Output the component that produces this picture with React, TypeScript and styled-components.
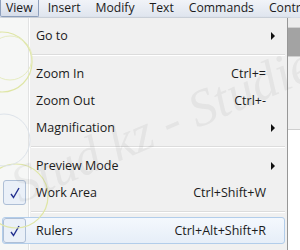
import styled, { createGlobalStyle } from 'styled-components';

const Global = createGlobalStyle`
  html, body { margin: 0; padding: 0; }
  body { width: 300px; height: 250px; overflow: hidden; background: #fff; }
`;

const Screen = styled.div`
  position: relative;
  width: 300px;
  height: 250px;
  overflow: hidden;
  font-family: "Open Sans", "Noto Sans", sans-serif;
  font-size: 12px;
  color: #1b1b1b;
  display: flex;
  flex-direction: column;
`;

const MenuBar = styled.div`
  height: 17px;
  display: flex;
  align-items: flex-start;
  gap: 3px;
  background: linear-gradient(#f1f3f8, #dfe5ee);
  border-bottom: 1px solid #d5dbe4;
  white-space: nowrap;
  flex: none;
  overflow: hidden;
`;

const BarItem = styled.div<{ $open?: boolean }>`
  height: 17px;
  box-sizing: border-box;
  line-height: 16px;
  padding: 0 5px;
  font-size: 12.2px;
  color: #1b1b1b;
  border: 1px solid ${p => (p.$open ? '#8ea0bd' : 'transparent')};
  border-top: none;
  border-radius: 0 0 2px 2px;
  background: ${p => (p.$open ? 'linear-gradient(#eef2f8, #d6dde9)' : 'transparent')};
  &:first-child { padding: 0 5px 0 5px; }
`;

const Body = styled.div`
  flex: 1;
  display: flex;
`;

const Dropdown = styled.div`
  width: 285px;
  flex: none;
  background: #f0f0f0;
  border-right: 1px solid #979797;
  box-shadow: 2px 0 2px rgba(0, 0, 0, 0.18);
  padding: 4px 0 0 2px;
  display: flex;
  flex-direction: column;
  background-image: linear-gradient(90deg, #f6f7f6 0, #f6f7f6 28px, #e2e3e3 28px, #e2e3e3 29px, #ffffff 29px, #ffffff 30px, transparent 30px);
`;

const Item = styled.div<{ $hot?: boolean }>`
  height: 27px;
  display: flex;
  align-items: center;
  margin-right: 2px;
  box-sizing: border-box;
  border: 1px solid ${p => (p.$hot ? '#b2cdea' : 'transparent')};
  border-radius: 3px;
  background: ${p => (p.$hot ? 'linear-gradient(#f4f8fd, #e6eef8)' : 'transparent')};
`;

const CheckBox = styled.div<{ $on?: boolean }>`
  width: 23px;
  height: 25px;
  flex: none;
  box-sizing: border-box;
  border: 1px solid ${p => (p.$on ? '#aebfd6' : 'transparent')};
  border-radius: 3px;
  background: ${p => (p.$on ? '#eaf0f8' : 'transparent')};
  display: flex;
  align-items: center;
  justify-content: center;
`;

const Label = styled.span`
  margin-left: 10px;
  flex: 1;
  font-size: 12.5px;
  white-space: nowrap;
`;

const Shortcut = styled.span`
  margin-right: 18px;
  font-size: 12.5px;
  white-space: nowrap;
`;

const Arrow = styled.span`
  width: 0;
  height: 0;
  margin-right: 9px;
  border-top: 4px solid transparent;
  border-bottom: 4px solid transparent;
  border-left: 4px solid #111;
`;

const Separator = styled.div`
  height: 11px;
  margin-left: 29px;
  margin-right: 2px;
  display: flex;
  flex-direction: column;
  justify-content: center;
  &::before { content: ''; height: 1px; background: #dcdcdc; }
  &::after { content: ''; height: 1px; background: #ffffff; }
`;

const Workspace = styled.div`
  flex: 1;
  display: flex;
  flex-direction: column;
`;

const Strip = styled.div<{ $h: number; $bg: string }>`
  height: ${p => p.$h}px;
  background: ${p => p.$bg};
  border-bottom: 1px solid #cfcfcf;
`;

const Watermark = styled.div`
  position: absolute;
  left: 2px;
  top: 160px;
  transform: rotate(-23deg);
  transform-origin: left top;
  font-family: "Liberation Serif", serif;
  font-style: italic;
  font-size: 52px;
  color: rgba(90, 90, 90, 0.08);
  white-space: nowrap;
  pointer-events: none;
`;

const Rings = styled.svg`
  position: absolute;
  left: 0;
  top: 0;
  pointer-events: none;
`;

function Tick() {
  return (
    <svg width="10" height="12" viewBox="0 0 10 12">
      <path d="M1 7 L3.5 10.5 L9 1" fill="none" stroke="#23308f" strokeWidth="1.4" />
    </svg>
  );
}

type Row = { label: string; key?: string; sub?: boolean; check?: boolean; hot?: boolean } | 'sep';

const rows: Row[] = [
  { label: 'Go to', sub: true },
  'sep',
  { label: 'Zoom In', key: 'Ctrl+=' },
  { label: 'Zoom Out', key: 'Ctrl+-' },
  { label: 'Magnification', sub: true },
  'sep',
  { label: 'Preview Mode', sub: true },
  { label: 'Work Area', key: 'Ctrl+Shift+W', check: true },
  'sep',
  { label: 'Rulers', key: 'Ctrl+Alt+Shift+R', check: true, hot: true },
];

export default function App() {
  return (
    <Screen>
      <Global />
      <MenuBar>
        <BarItem $open>View</BarItem>
        <BarItem>Insert</BarItem>
        <BarItem>Modify</BarItem>
        <BarItem>Text</BarItem>
        <BarItem>Commands</BarItem>
        <BarItem>Control</BarItem>
      </MenuBar>
      <Body>
        <Dropdown>
          {rows.map((r, i) =>
            r === 'sep' ? (
              <Separator key={i} />
            ) : (
              <Item key={i} $hot={r.hot}>
                <CheckBox $on={r.check}>{r.check && <Tick />}</CheckBox>
                <Label>{r.label}</Label>
                {r.key && <Shortcut>{r.key}</Shortcut>}
                {r.sub && <Arrow />}
              </Item>
            )
          )}
        </Dropdown>
        <Workspace>
          <Strip $h={9} $bg="#ececec" />
          <Strip $h={28} $bg="#a3a3a3" />
          <Strip $h={72} $bg="#f1f1f1" />
          <Strip $h={130} $bg="#ffffff" />
        </Workspace>
      </Body>
      <Rings width="300" height="250">
        <circle cx="2" cy="62" r="30" fill="none" stroke="#dfe6a6" strokeWidth="1.2" />
        <circle cx="10" cy="58" r="22" fill="none" stroke="#e6ecc0" strokeWidth="1" />
        <circle cx="16" cy="196" r="32" fill="none" stroke="#dfe6a6" strokeWidth="1.2" />
        <circle cx="4" cy="140" r="26" fill="none" stroke="#dde3ea" strokeWidth="1" />
      </Rings>
      <Watermark>Stud.kz - Studies</Watermark>
    </Screen>
  );
}
